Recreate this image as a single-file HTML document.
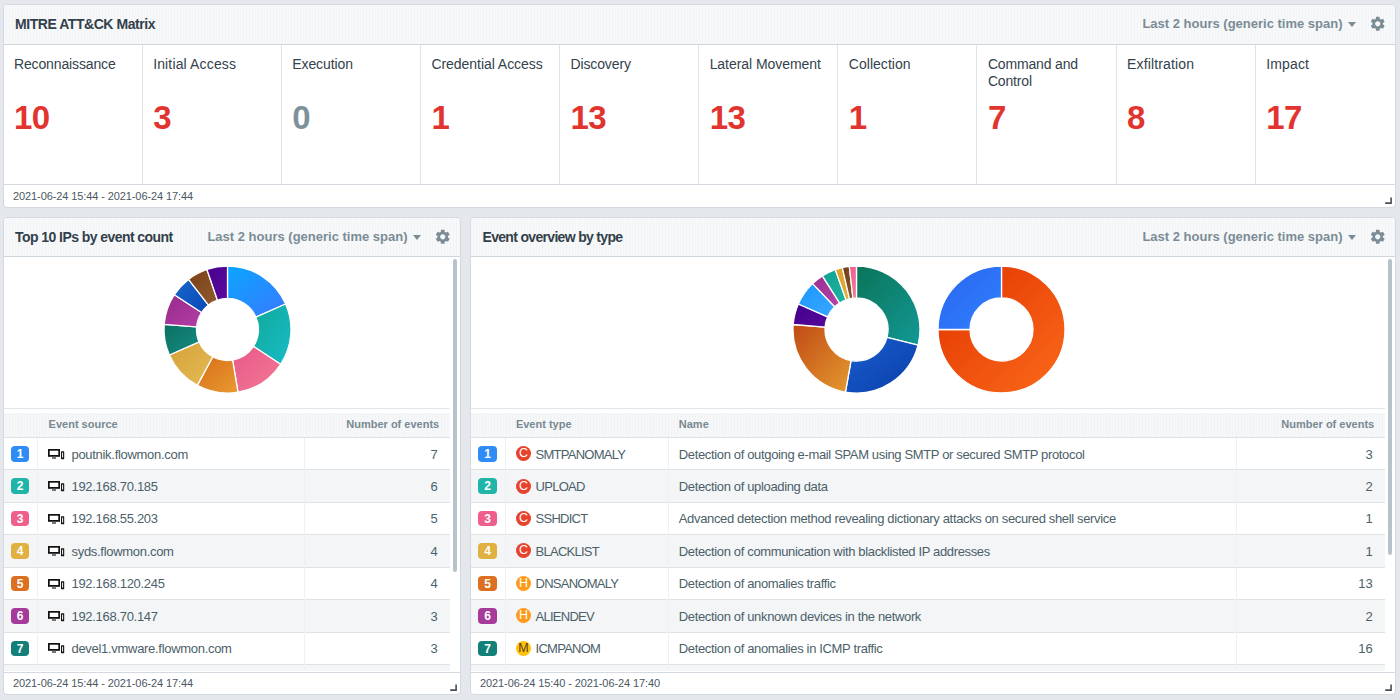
<!DOCTYPE html>
<html><head><meta charset="utf-8">
<style>
*{box-sizing:border-box;margin:0;padding:0}
html,body{width:1400px;height:700px;overflow:hidden;background:#e4e7eb;font-family:"Liberation Sans",sans-serif;color:#3f4f59;position:relative}
.t{position:absolute;white-space:nowrap}
.b{position:absolute}
</style></head><body>
<div class="b" style="left:2.5px;top:4px;width:1393.5px;height:203.5px;background:#fff;border:1px solid #d3d9de;border-radius:4px"></div>
<div class="b" style="left:3.5px;top:5px;width:1391.5px;height:38.5px;background:linear-gradient(#f7f8f9 1px, transparent 1px) 0 0/3px 2px, linear-gradient(90deg, #f7f8f9 2px, #eef0f2 2px) 0 0/3px 2px;border-radius:3px 3px 0 0"></div>
<div class="b" style="left:3.5px;top:43.5px;width:1391.5px;height:1.0px;background:#cfd6db"></div>
<div class="b" style="left:3.5px;top:184px;width:1391.5px;height:1px;background:#d3d9de"></div>
<div class="t" style="left:15px;top:16.75px;font-size:14px;line-height:14px;font-weight:bold;color:#33404a;letter-spacing:-0.45px;">MITRE ATT&amp;CK Matrix</div>
<div class="t" style="right:57.5px;text-align:right;top:17.00px;font-size:13px;line-height:13px;font-weight:bold;color:#7b8c96;letter-spacing:0px;">Last 2 hours (generic time span)</div>
<div class="b" style="left:1348.2px;top:21.7px;width:0;height:0;border-left:4.5px solid transparent;border-right:4.5px solid transparent;border-top:5px solid #7b8c96"></div>
<svg class="b" style="left:1368.95px;top:14.95px;width:17.5px;height:17.5px" viewBox="0 0 24 24"><path fill="#7b8c96" d="M19.14,12.94c0.04-0.3,0.06-0.61,0.06-0.94c0-0.32-0.02-0.64-0.07-0.94l2.03-1.58c0.18-0.14,0.23-0.41,0.12-0.61l-1.92-3.32c-0.12-0.22-0.37-0.29-0.59-0.22l-2.39,0.96c-0.5-0.38-1.03-0.7-1.62-0.94L14.4,2.81c-0.04-0.24-0.24-0.41-0.48-0.41h-3.84c-0.24,0-0.43,0.17-0.47,0.41L9.25,5.35C8.66,5.59,8.12,5.92,7.63,6.29L5.24,5.33c-0.22-0.08-0.47,0-0.59,0.22L2.74,8.87C2.62,9.08,2.66,9.34,2.86,9.48l2.03,1.58C4.84,11.36,4.8,11.69,4.8,12s0.02,0.64,0.07,0.94l-2.03,1.58c-0.18,0.14-0.23,0.41-0.12,0.61l1.92,3.32c0.12,0.22,0.37,0.29,0.59,0.22l2.39-0.96c0.5,0.38,1.03,0.7,1.62,0.94l0.36,2.54c0.05,0.24,0.24,0.41,0.48,0.41h3.84c0.24,0,0.44-0.17,0.47-0.41l0.36-2.54c0.59-0.24,1.13-0.56,1.62-0.94l2.39,0.96c0.22,0.08,0.47,0,0.59-0.22l1.92-3.32c0.12-0.22,0.07-0.47-0.12-0.61L19.14,12.94z M12,15.6c-1.98,0-3.6-1.62-3.6-3.6s1.62-3.6,3.6-3.6s3.6,1.62,3.6,3.6S13.98,15.6,12,15.6z"/></svg>
<div class="t" style="left:14.0px;top:56.40px;font-size:14px;line-height:16.5px;font-weight:normal;color:#34424c;letter-spacing:-0.14px;">Reconnaissance</div>
<div class="t" style="left:14.0px;top:101.07px;font-size:33px;line-height:33px;font-weight:bold;color:#e2342f;letter-spacing:-0.6px;">10</div>
<div class="b" style="left:141.625px;top:45px;width:1.0px;height:139px;background:#dde3e7"></div>
<div class="t" style="left:153.125px;top:56.40px;font-size:14px;line-height:16.5px;font-weight:normal;color:#34424c;letter-spacing:0.15px;">Initial Access</div>
<div class="t" style="left:153.125px;top:101.07px;font-size:33px;line-height:33px;font-weight:bold;color:#e2342f;letter-spacing:-0.6px;">3</div>
<div class="b" style="left:280.75px;top:45px;width:1.0px;height:139px;background:#dde3e7"></div>
<div class="t" style="left:292.25px;top:56.40px;font-size:14px;line-height:16.5px;font-weight:normal;color:#34424c;letter-spacing:-0.1px;">Execution</div>
<div class="t" style="left:292.25px;top:101.07px;font-size:33px;line-height:33px;font-weight:bold;color:#7e919b;letter-spacing:-0.6px;">0</div>
<div class="b" style="left:419.875px;top:45px;width:1.0px;height:139px;background:#dde3e7"></div>
<div class="t" style="left:431.375px;top:56.40px;font-size:14px;line-height:16.5px;font-weight:normal;color:#34424c;letter-spacing:-0.04px;">Credential Access</div>
<div class="t" style="left:431.375px;top:101.07px;font-size:33px;line-height:33px;font-weight:bold;color:#e2342f;letter-spacing:-0.6px;">1</div>
<div class="b" style="left:559.0px;top:45px;width:1.0px;height:139px;background:#dde3e7"></div>
<div class="t" style="left:570.5px;top:56.40px;font-size:14px;line-height:16.5px;font-weight:normal;color:#34424c;letter-spacing:-0.13px;">Discovery</div>
<div class="t" style="left:570.5px;top:101.07px;font-size:33px;line-height:33px;font-weight:bold;color:#e2342f;letter-spacing:-0.6px;">13</div>
<div class="b" style="left:698.125px;top:45px;width:1.0px;height:139px;background:#dde3e7"></div>
<div class="t" style="left:709.625px;top:56.40px;font-size:14px;line-height:16.5px;font-weight:normal;color:#34424c;letter-spacing:-0.05px;">Lateral Movement</div>
<div class="t" style="left:709.625px;top:101.07px;font-size:33px;line-height:33px;font-weight:bold;color:#e2342f;letter-spacing:-0.6px;">13</div>
<div class="b" style="left:837.25px;top:45px;width:1.0px;height:139px;background:#dde3e7"></div>
<div class="t" style="left:848.75px;top:56.40px;font-size:14px;line-height:16.5px;font-weight:normal;color:#34424c;letter-spacing:0.04px;">Collection</div>
<div class="t" style="left:848.75px;top:101.07px;font-size:33px;line-height:33px;font-weight:bold;color:#e2342f;letter-spacing:-0.6px;">1</div>
<div class="b" style="left:976.375px;top:45px;width:1.0px;height:139px;background:#dde3e7"></div>
<div class="t" style="left:987.875px;top:56.40px;font-size:14px;line-height:16.5px;font-weight:normal;color:#34424c;letter-spacing:-0.16px;">Command and<br>Control</div>
<div class="t" style="left:987.875px;top:101.07px;font-size:33px;line-height:33px;font-weight:bold;color:#e2342f;letter-spacing:-0.6px;">7</div>
<div class="b" style="left:1115.5px;top:45px;width:1.0px;height:139px;background:#dde3e7"></div>
<div class="t" style="left:1127.0px;top:56.40px;font-size:14px;line-height:16.5px;font-weight:normal;color:#34424c;letter-spacing:0.15px;">Exfiltration</div>
<div class="t" style="left:1127.0px;top:101.07px;font-size:33px;line-height:33px;font-weight:bold;color:#e2342f;letter-spacing:-0.6px;">8</div>
<div class="b" style="left:1254.625px;top:45px;width:1.0px;height:139px;background:#dde3e7"></div>
<div class="t" style="left:1266.125px;top:56.40px;font-size:14px;line-height:16.5px;font-weight:normal;color:#34424c;letter-spacing:0.17px;">Impact</div>
<div class="t" style="left:1266.125px;top:101.07px;font-size:33px;line-height:33px;font-weight:bold;color:#e2342f;letter-spacing:-0.6px;">17</div>
<div class="t" style="left:13px;top:190.89px;font-size:11px;line-height:11px;font-weight:normal;color:#4b5862;letter-spacing:-0.1px;">2021-06-24 15:44 - 2021-06-24 17:44</div>
<svg class="b" style="left:1385px;top:197px;width:7px;height:7px" viewBox="0 0 7 7"><path d="M6.1,0.4V6.1H0.2" fill="none" stroke="#4c4c56" stroke-width="1.6"/></svg>
<div class="b" style="left:2.5px;top:217px;width:458.5px;height:478px;background:#fff;border:1px solid #d3d9de;border-radius:4px"></div>
<div class="b" style="left:3.5px;top:218px;width:456.5px;height:38px;background:linear-gradient(#f7f8f9 1px, transparent 1px) 0 0/3px 2px, linear-gradient(90deg, #f7f8f9 2px, #eef0f2 2px) 0 0/3px 2px;border-radius:3px 3px 0 0"></div>
<div class="b" style="left:3.5px;top:256px;width:456.5px;height:1px;background:#cfd6db"></div>
<div class="b" style="left:3.5px;top:672px;width:456.5px;height:1px;background:#d3d9de"></div>
<div class="t" style="left:15px;top:229.75px;font-size:14px;line-height:14px;font-weight:bold;color:#33404a;letter-spacing:-0.56px;">Top 10 IPs by event count</div>
<div class="t" style="right:992.5px;text-align:right;top:230.30px;font-size:13px;line-height:13px;font-weight:bold;color:#7b8c96;letter-spacing:0px;">Last 2 hours (generic time span)</div>
<div class="b" style="left:413.2px;top:235.0px;width:0;height:0;border-left:4.5px solid transparent;border-right:4.5px solid transparent;border-top:5px solid #7b8c96"></div>
<svg class="b" style="left:433.75px;top:228.25px;width:17.5px;height:17.5px" viewBox="0 0 24 24"><path fill="#7b8c96" d="M19.14,12.94c0.04-0.3,0.06-0.61,0.06-0.94c0-0.32-0.02-0.64-0.07-0.94l2.03-1.58c0.18-0.14,0.23-0.41,0.12-0.61l-1.92-3.32c-0.12-0.22-0.37-0.29-0.59-0.22l-2.39,0.96c-0.5-0.38-1.03-0.7-1.62-0.94L14.4,2.81c-0.04-0.24-0.24-0.41-0.48-0.41h-3.84c-0.24,0-0.43,0.17-0.47,0.41L9.25,5.35C8.66,5.59,8.12,5.92,7.63,6.29L5.24,5.33c-0.22-0.08-0.47,0-0.59,0.22L2.74,8.87C2.62,9.08,2.66,9.34,2.86,9.48l2.03,1.58C4.84,11.36,4.8,11.69,4.8,12s0.02,0.64,0.07,0.94l-2.03,1.58c-0.18,0.14-0.23,0.41-0.12,0.61l1.92,3.32c0.12,0.22,0.37,0.29,0.59,0.22l2.39-0.96c0.5,0.38,1.03,0.7,1.62,0.94l0.36,2.54c0.05,0.24,0.24,0.41,0.48,0.41h3.84c0.24,0,0.44-0.17,0.47-0.41l0.36-2.54c0.59-0.24,1.13-0.56,1.62-0.94l2.39,0.96c0.22,0.08,0.47,0,0.59-0.22l1.92-3.32c0.12-0.22,0.07-0.47-0.12-0.61L19.14,12.94z M12,15.6c-1.98,0-3.6-1.62-3.6-3.6s1.62-3.6,3.6-3.6s3.6,1.62,3.6,3.6S13.98,15.6,12,15.6z"/></svg>
<svg class="b" style="left:161.60px;top:264.00px;width:131.0px;height:131.0px" viewBox="0 0 131.0 131.0"><defs><linearGradient id="gL_0" x1="0" y1="0" x2="1" y2="1"><stop offset="0" stop-color="#0aa6ff"/><stop offset="1" stop-color="#3a78ff"/></linearGradient><linearGradient id="gL_1" x1="0" y1="0" x2="1" y2="1"><stop offset="0" stop-color="#10a898"/><stop offset="1" stop-color="#18bcc8"/></linearGradient><linearGradient id="gL_2" x1="0" y1="0" x2="1" y2="1"><stop offset="0" stop-color="#e8588a"/><stop offset="1" stop-color="#f27a94"/></linearGradient><linearGradient id="gL_3" x1="0" y1="0" x2="1" y2="1"><stop offset="0" stop-color="#d86e18"/><stop offset="1" stop-color="#e89a32"/></linearGradient><linearGradient id="gL_4" x1="0" y1="0" x2="1" y2="1"><stop offset="0" stop-color="#d8a038"/><stop offset="1" stop-color="#e2bc55"/></linearGradient><linearGradient id="gL_5" x1="0" y1="0" x2="1" y2="1"><stop offset="0" stop-color="#0a7060"/><stop offset="1" stop-color="#188c84"/></linearGradient><linearGradient id="gL_6" x1="0" y1="0" x2="1" y2="1"><stop offset="0" stop-color="#962a8a"/><stop offset="1" stop-color="#b43ea6"/></linearGradient><linearGradient id="gL_7" x1="0" y1="0" x2="1" y2="1"><stop offset="0" stop-color="#1868c8"/><stop offset="1" stop-color="#0a46b8"/></linearGradient><linearGradient id="gL_8" x1="0" y1="0" x2="1" y2="1"><stop offset="0" stop-color="#7a4018"/><stop offset="1" stop-color="#905a30"/></linearGradient><linearGradient id="gL_9" x1="0" y1="0" x2="1" y2="1"><stop offset="0" stop-color="#48008a"/><stop offset="1" stop-color="#5a0aa0"/></linearGradient></defs><path d="M65.50,2.00A63.5,63.5 0 0 1 123.64,39.98L93.89,53.04A31,31 0 0 0 65.50,34.50Z" fill="url(#gL_0)" stroke="#fff" stroke-width="1.3" stroke-linejoin="bevel"/><path d="M123.64,39.98A63.5,63.5 0 0 1 118.63,100.27L91.44,82.47A31,31 0 0 0 93.89,53.04Z" fill="url(#gL_1)" stroke="#fff" stroke-width="1.3" stroke-linejoin="bevel"/><path d="M118.63,100.27A63.5,63.5 0 0 1 75.98,128.13L70.62,96.07A31,31 0 0 0 91.44,82.47Z" fill="url(#gL_2)" stroke="#fff" stroke-width="1.3" stroke-linejoin="bevel"/><path d="M75.98,128.13A63.5,63.5 0 0 1 35.30,121.36L50.76,92.77A31,31 0 0 0 70.62,96.07Z" fill="url(#gL_3)" stroke="#fff" stroke-width="1.3" stroke-linejoin="bevel"/><path d="M35.30,121.36A63.5,63.5 0 0 1 7.36,91.02L37.11,77.96A31,31 0 0 0 50.76,92.77Z" fill="url(#gL_4)" stroke="#fff" stroke-width="1.3" stroke-linejoin="bevel"/><path d="M7.36,91.02A63.5,63.5 0 0 1 2.21,60.30L34.60,62.96A31,31 0 0 0 37.11,77.96Z" fill="url(#gL_5)" stroke="#fff" stroke-width="1.3" stroke-linejoin="bevel"/><path d="M2.21,60.30A63.5,63.5 0 0 1 12.37,30.73L39.56,48.53A31,31 0 0 0 34.60,62.96Z" fill="url(#gL_6)" stroke="#fff" stroke-width="1.3" stroke-linejoin="bevel"/><path d="M12.37,30.73A63.5,63.5 0 0 1 26.49,15.39L46.46,41.04A31,31 0 0 0 39.56,48.53Z" fill="url(#gL_7)" stroke="#fff" stroke-width="1.3" stroke-linejoin="bevel"/><path d="M26.49,15.39A63.5,63.5 0 0 1 44.93,5.42L55.46,36.17A31,31 0 0 0 46.46,41.04Z" fill="url(#gL_8)" stroke="#fff" stroke-width="1.3" stroke-linejoin="bevel"/><path d="M44.93,5.42A63.5,63.5 0 0 1 65.50,2.00L65.50,34.50A31,31 0 0 0 55.46,36.17Z" fill="url(#gL_9)" stroke="#fff" stroke-width="1.3" stroke-linejoin="bevel"/></svg>
<div class="b" style="left:4px;top:408px;width:446px;height:1px;background:#e2e6e9"></div>
<div class="b" style="left:4px;top:413px;width:446px;height:24px;background:linear-gradient(#f6f7f8 1px, transparent 1px) 0 0/3px 2px, linear-gradient(90deg, #f6f7f8 2px, #eceef0 2px) 0 0/3px 2px"></div>
<div class="b" style="left:4px;top:437px;width:446px;height:1px;background:#dde2e6"></div>
<div class="b" style="left:4px;top:470px;width:446px;height:32px;background:#f3f5f7"></div>
<div class="b" style="left:4px;top:469px;width:446px;height:1px;background:#dde2e6"></div>
<div class="b" style="left:4px;top:502px;width:446px;height:1px;background:#dde2e6"></div>
<div class="b" style="left:4px;top:535px;width:446px;height:32px;background:#f3f5f7"></div>
<div class="b" style="left:4px;top:534px;width:446px;height:1px;background:#dde2e6"></div>
<div class="b" style="left:4px;top:567px;width:446px;height:1px;background:#dde2e6"></div>
<div class="b" style="left:4px;top:600px;width:446px;height:32px;background:#f3f5f7"></div>
<div class="b" style="left:4px;top:599px;width:446px;height:1px;background:#dde2e6"></div>
<div class="b" style="left:4px;top:632px;width:446px;height:1px;background:#dde2e6"></div>
<div class="b" style="left:4px;top:665px;width:446px;height:6px;background:#f3f5f7"></div>
<div class="b" style="left:4px;top:664px;width:446px;height:1px;background:#dde2e6"></div>
<div class="b" style="left:37px;top:438px;width:1px;height:233px;background:#eef1f3"></div>
<div class="b" style="left:304px;top:438px;width:1px;height:233px;background:#eef1f3"></div>
<div class="t" style="left:48.6px;top:419.49px;font-size:11px;line-height:11px;font-weight:bold;color:#788992;letter-spacing:0px;">Event source</div>
<div class="t" style="right:960.8px;text-align:right;top:419.49px;font-size:11px;line-height:11px;font-weight:bold;color:#788992;letter-spacing:0px;">Number of events</div>
<div class="b" style="left:10.9px;top:446.01px;width:18.2px;height:15.5px;border-radius:4px;background:#2f8cf5;color:#fff;font-size:12px;font-weight:bold;line-height:16.5px;text-align:center">1</div>
<svg class="b" style="left:48px;top:448.81px;width:17px;height:11px" viewBox="0 0 17 11"><rect x="0" y="0" width="12" height="7.8" fill="#111"/><rect x="1.7" y="1.7" width="8.6" height="4.3" fill="#fff"/><rect x="4" y="7.8" width="4" height="2.2" fill="#777"/><rect x="13" y="2.2" width="3.2" height="8" rx="0.6" fill="#111"/><rect x="14.1" y="3.6" width="1" height="5" fill="#fff"/></svg>
<div class="t" style="left:71.5px;top:447.51px;font-size:13px;line-height:13px;font-weight:normal;color:#4c5f69;letter-spacing:-0.3px;">poutnik.flowmon.com</div>
<div class="t" style="right:962.3px;text-align:right;top:447.51px;font-size:13px;line-height:13px;font-weight:normal;color:#4c5f69;letter-spacing:0px;">7</div>
<div class="b" style="left:10.9px;top:478.44px;width:18.2px;height:15.5px;border-radius:4px;background:#1fb5a8;color:#fff;font-size:12px;font-weight:bold;line-height:16.5px;text-align:center">2</div>
<svg class="b" style="left:48px;top:481.25px;width:17px;height:11px" viewBox="0 0 17 11"><rect x="0" y="0" width="12" height="7.8" fill="#111"/><rect x="1.7" y="1.7" width="8.6" height="4.3" fill="#fff"/><rect x="4" y="7.8" width="4" height="2.2" fill="#777"/><rect x="13" y="2.2" width="3.2" height="8" rx="0.6" fill="#111"/><rect x="14.1" y="3.6" width="1" height="5" fill="#fff"/></svg>
<div class="t" style="left:71.5px;top:479.94px;font-size:13px;line-height:13px;font-weight:normal;color:#4c5f69;letter-spacing:-0.3px;">192.168.70.185</div>
<div class="t" style="right:962.3px;text-align:right;top:479.94px;font-size:13px;line-height:13px;font-weight:normal;color:#4c5f69;letter-spacing:0px;">6</div>
<div class="b" style="left:10.9px;top:510.88px;width:18.2px;height:15.5px;border-radius:4px;background:#ee5f8c;color:#fff;font-size:12px;font-weight:bold;line-height:16.5px;text-align:center">3</div>
<svg class="b" style="left:48px;top:513.68px;width:17px;height:11px" viewBox="0 0 17 11"><rect x="0" y="0" width="12" height="7.8" fill="#111"/><rect x="1.7" y="1.7" width="8.6" height="4.3" fill="#fff"/><rect x="4" y="7.8" width="4" height="2.2" fill="#777"/><rect x="13" y="2.2" width="3.2" height="8" rx="0.6" fill="#111"/><rect x="14.1" y="3.6" width="1" height="5" fill="#fff"/></svg>
<div class="t" style="left:71.5px;top:512.37px;font-size:13px;line-height:13px;font-weight:normal;color:#4c5f69;letter-spacing:-0.3px;">192.168.55.203</div>
<div class="t" style="right:962.3px;text-align:right;top:512.37px;font-size:13px;line-height:13px;font-weight:normal;color:#4c5f69;letter-spacing:0px;">5</div>
<div class="b" style="left:10.9px;top:543.30px;width:18.2px;height:15.5px;border-radius:4px;background:#e0b040;color:#fff;font-size:12px;font-weight:bold;line-height:16.5px;text-align:center">4</div>
<svg class="b" style="left:48px;top:546.11px;width:17px;height:11px" viewBox="0 0 17 11"><rect x="0" y="0" width="12" height="7.8" fill="#111"/><rect x="1.7" y="1.7" width="8.6" height="4.3" fill="#fff"/><rect x="4" y="7.8" width="4" height="2.2" fill="#777"/><rect x="13" y="2.2" width="3.2" height="8" rx="0.6" fill="#111"/><rect x="14.1" y="3.6" width="1" height="5" fill="#fff"/></svg>
<div class="t" style="left:71.5px;top:544.80px;font-size:13px;line-height:13px;font-weight:normal;color:#4c5f69;letter-spacing:-0.3px;">syds.flowmon.com</div>
<div class="t" style="right:962.3px;text-align:right;top:544.80px;font-size:13px;line-height:13px;font-weight:normal;color:#4c5f69;letter-spacing:0px;">4</div>
<div class="b" style="left:10.9px;top:575.74px;width:18.2px;height:15.5px;border-radius:4px;background:#dd7020;color:#fff;font-size:12px;font-weight:bold;line-height:16.5px;text-align:center">5</div>
<svg class="b" style="left:48px;top:578.54px;width:17px;height:11px" viewBox="0 0 17 11"><rect x="0" y="0" width="12" height="7.8" fill="#111"/><rect x="1.7" y="1.7" width="8.6" height="4.3" fill="#fff"/><rect x="4" y="7.8" width="4" height="2.2" fill="#777"/><rect x="13" y="2.2" width="3.2" height="8" rx="0.6" fill="#111"/><rect x="14.1" y="3.6" width="1" height="5" fill="#fff"/></svg>
<div class="t" style="left:71.5px;top:577.23px;font-size:13px;line-height:13px;font-weight:normal;color:#4c5f69;letter-spacing:-0.3px;">192.168.120.245</div>
<div class="t" style="right:962.3px;text-align:right;top:577.23px;font-size:13px;line-height:13px;font-weight:normal;color:#4c5f69;letter-spacing:0px;">4</div>
<div class="b" style="left:10.9px;top:608.16px;width:18.2px;height:15.5px;border-radius:4px;background:#a63b9c;color:#fff;font-size:12px;font-weight:bold;line-height:16.5px;text-align:center">6</div>
<svg class="b" style="left:48px;top:610.97px;width:17px;height:11px" viewBox="0 0 17 11"><rect x="0" y="0" width="12" height="7.8" fill="#111"/><rect x="1.7" y="1.7" width="8.6" height="4.3" fill="#fff"/><rect x="4" y="7.8" width="4" height="2.2" fill="#777"/><rect x="13" y="2.2" width="3.2" height="8" rx="0.6" fill="#111"/><rect x="14.1" y="3.6" width="1" height="5" fill="#fff"/></svg>
<div class="t" style="left:71.5px;top:609.66px;font-size:13px;line-height:13px;font-weight:normal;color:#4c5f69;letter-spacing:-0.3px;">192.168.70.147</div>
<div class="t" style="right:962.3px;text-align:right;top:609.66px;font-size:13px;line-height:13px;font-weight:normal;color:#4c5f69;letter-spacing:0px;">3</div>
<div class="b" style="left:10.9px;top:640.59px;width:18.2px;height:15.5px;border-radius:4px;background:#127f78;color:#fff;font-size:12px;font-weight:bold;line-height:16.5px;text-align:center">7</div>
<svg class="b" style="left:48px;top:643.39px;width:17px;height:11px" viewBox="0 0 17 11"><rect x="0" y="0" width="12" height="7.8" fill="#111"/><rect x="1.7" y="1.7" width="8.6" height="4.3" fill="#fff"/><rect x="4" y="7.8" width="4" height="2.2" fill="#777"/><rect x="13" y="2.2" width="3.2" height="8" rx="0.6" fill="#111"/><rect x="14.1" y="3.6" width="1" height="5" fill="#fff"/></svg>
<div class="t" style="left:71.5px;top:642.09px;font-size:13px;line-height:13px;font-weight:normal;color:#4c5f69;letter-spacing:-0.3px;">devel1.vmware.flowmon.com</div>
<div class="t" style="right:962.3px;text-align:right;top:642.09px;font-size:13px;line-height:13px;font-weight:normal;color:#4c5f69;letter-spacing:0px;">3</div>
<div class="b" style="left:453px;top:259px;width:4px;height:313px;background:#b7c3ca;border-radius:2px"></div>
<div class="t" style="left:13px;top:678.29px;font-size:11px;line-height:11px;font-weight:normal;color:#4b5862;letter-spacing:-0.1px;">2021-06-24 15:44 - 2021-06-24 17:44</div>
<svg class="b" style="left:450px;top:684px;width:7px;height:7px" viewBox="0 0 7 7"><path d="M6.1,0.4V6.1H0.2" fill="none" stroke="#4c4c56" stroke-width="1.6"/></svg>
<div class="b" style="left:470px;top:217px;width:926px;height:478px;background:#fff;border:1px solid #d3d9de;border-radius:4px"></div>
<div class="b" style="left:471px;top:218px;width:924px;height:38px;background:linear-gradient(#f7f8f9 1px, transparent 1px) 0 0/3px 2px, linear-gradient(90deg, #f7f8f9 2px, #eef0f2 2px) 0 0/3px 2px;border-radius:3px 3px 0 0"></div>
<div class="b" style="left:471px;top:256px;width:924px;height:1px;background:#cfd6db"></div>
<div class="b" style="left:471px;top:672px;width:924px;height:1px;background:#d3d9de"></div>
<div class="t" style="left:482.5px;top:229.75px;font-size:14px;line-height:14px;font-weight:bold;color:#33404a;letter-spacing:-0.68px;">Event overview by type</div>
<div class="t" style="right:57.5px;text-align:right;top:230.30px;font-size:13px;line-height:13px;font-weight:bold;color:#7b8c96;letter-spacing:0px;">Last 2 hours (generic time span)</div>
<div class="b" style="left:1348.2px;top:235.0px;width:0;height:0;border-left:4.5px solid transparent;border-right:4.5px solid transparent;border-top:5px solid #7b8c96"></div>
<svg class="b" style="left:1368.95px;top:228.25px;width:17.5px;height:17.5px" viewBox="0 0 24 24"><path fill="#7b8c96" d="M19.14,12.94c0.04-0.3,0.06-0.61,0.06-0.94c0-0.32-0.02-0.64-0.07-0.94l2.03-1.58c0.18-0.14,0.23-0.41,0.12-0.61l-1.92-3.32c-0.12-0.22-0.37-0.29-0.59-0.22l-2.39,0.96c-0.5-0.38-1.03-0.7-1.62-0.94L14.4,2.81c-0.04-0.24-0.24-0.41-0.48-0.41h-3.84c-0.24,0-0.43,0.17-0.47,0.41L9.25,5.35C8.66,5.59,8.12,5.92,7.63,6.29L5.24,5.33c-0.22-0.08-0.47,0-0.59,0.22L2.74,8.87C2.62,9.08,2.66,9.34,2.86,9.48l2.03,1.58C4.84,11.36,4.8,11.69,4.8,12s0.02,0.64,0.07,0.94l-2.03,1.58c-0.18,0.14-0.23,0.41-0.12,0.61l1.92,3.32c0.12,0.22,0.37,0.29,0.59,0.22l2.39-0.96c0.5,0.38,1.03,0.7,1.62,0.94l0.36,2.54c0.05,0.24,0.24,0.41,0.48,0.41h3.84c0.24,0,0.44-0.17,0.47-0.41l0.36-2.54c0.59-0.24,1.13-0.56,1.62-0.94l2.39,0.96c0.22,0.08,0.47,0,0.59-0.22l1.92-3.32c0.12-0.22,0.07-0.47-0.12-0.61L19.14,12.94z M12,15.6c-1.98,0-3.6-1.62-3.6-3.6s1.62-3.6,3.6-3.6s3.6,1.62,3.6,3.6S13.98,15.6,12,15.6z"/></svg>
<svg class="b" style="left:790.50px;top:264.00px;width:131.0px;height:131.0px" viewBox="0 0 131.0 131.0"><defs><linearGradient id="gM_0" x1="0" y1="0" x2="1" y2="1"><stop offset="0" stop-color="#0b7458"/><stop offset="1" stop-color="#129895"/></linearGradient><linearGradient id="gM_1" x1="0" y1="0" x2="1" y2="1"><stop offset="0" stop-color="#1a5ed0"/><stop offset="1" stop-color="#0a3ea8"/></linearGradient><linearGradient id="gM_2" x1="0" y1="0" x2="1" y2="1"><stop offset="0" stop-color="#c04a14"/><stop offset="1" stop-color="#e49a30"/></linearGradient><linearGradient id="gM_3" x1="0" y1="0" x2="1" y2="1"><stop offset="0" stop-color="#40008a"/><stop offset="1" stop-color="#560a9a"/></linearGradient><linearGradient id="gM_4" x1="0" y1="0" x2="1" y2="1"><stop offset="0" stop-color="#1a96ff"/><stop offset="1" stop-color="#3aa8ff"/></linearGradient><linearGradient id="gM_5" x1="0" y1="0" x2="1" y2="1"><stop offset="0" stop-color="#9a2f92"/><stop offset="1" stop-color="#b444a8"/></linearGradient><linearGradient id="gM_6" x1="0" y1="0" x2="1" y2="1"><stop offset="0" stop-color="#12a090"/><stop offset="1" stop-color="#1ab4a2"/></linearGradient><linearGradient id="gM_7" x1="0" y1="0" x2="1" y2="1"><stop offset="0" stop-color="#dc9a28"/><stop offset="1" stop-color="#e8b040"/></linearGradient><linearGradient id="gM_8" x1="0" y1="0" x2="1" y2="1"><stop offset="0" stop-color="#704018"/><stop offset="1" stop-color="#885428"/></linearGradient><linearGradient id="gM_9" x1="0" y1="0" x2="1" y2="1"><stop offset="0" stop-color="#f05a90"/><stop offset="1" stop-color="#f47aa0"/></linearGradient></defs><path d="M65.50,2.00A63.5,63.5 0 0 1 127.03,81.18L96.02,73.28A31.5,31.5 0 0 0 65.50,34.00Z" fill="url(#gM_0)" stroke="#fff" stroke-width="1.3" stroke-linejoin="bevel"/><path d="M127.03,81.18A63.5,63.5 0 0 1 54.47,128.04L60.03,96.52A31.5,31.5 0 0 0 96.02,73.28Z" fill="url(#gM_1)" stroke="#fff" stroke-width="1.3" stroke-linejoin="bevel"/><path d="M54.47,128.04A63.5,63.5 0 0 1 2.20,60.52L34.10,63.03A31.5,31.5 0 0 0 60.03,96.52Z" fill="url(#gM_2)" stroke="#fff" stroke-width="1.3" stroke-linejoin="bevel"/><path d="M2.20,60.52A63.5,63.5 0 0 1 7.36,39.98L36.66,52.84A31.5,31.5 0 0 0 34.10,63.03Z" fill="url(#gM_3)" stroke="#fff" stroke-width="1.3" stroke-linejoin="bevel"/><path d="M7.36,39.98A63.5,63.5 0 0 1 21.63,19.59L43.74,42.73A31.5,31.5 0 0 0 36.66,52.84Z" fill="url(#gM_4)" stroke="#fff" stroke-width="1.3" stroke-linejoin="bevel"/><path d="M21.63,19.59A63.5,63.5 0 0 1 31.38,11.94L48.58,38.93A31.5,31.5 0 0 0 43.74,42.73Z" fill="url(#gM_5)" stroke="#fff" stroke-width="1.3" stroke-linejoin="bevel"/><path d="M31.38,11.94A63.5,63.5 0 0 1 44.30,5.64L54.99,35.81A31.5,31.5 0 0 0 48.58,38.93Z" fill="url(#gM_6)" stroke="#fff" stroke-width="1.3" stroke-linejoin="bevel"/><path d="M44.30,5.64A63.5,63.5 0 0 1 51.32,3.60L58.47,34.80A31.5,31.5 0 0 0 54.99,35.81Z" fill="url(#gM_7)" stroke="#fff" stroke-width="1.3" stroke-linejoin="bevel"/><path d="M51.32,3.60A63.5,63.5 0 0 1 58.31,2.41L61.93,34.20A31.5,31.5 0 0 0 58.47,34.80Z" fill="url(#gM_8)" stroke="#fff" stroke-width="1.3" stroke-linejoin="bevel"/><path d="M58.31,2.41A63.5,63.5 0 0 1 65.50,2.00L65.50,34.00A31.5,31.5 0 0 0 61.93,34.20Z" fill="url(#gM_9)" stroke="#fff" stroke-width="1.3" stroke-linejoin="bevel"/></svg>
<svg class="b" style="left:935.50px;top:264.00px;width:131.0px;height:131.0px" viewBox="0 0 131.0 131.0"><defs><linearGradient id="gR_0" x1="0" y1="0" x2="1" y2="1"><stop offset="0" stop-color="#e23400"/><stop offset="1" stop-color="#fa6a1a"/></linearGradient><linearGradient id="gR_1" x1="0" y1="0" x2="1" y2="1"><stop offset="0" stop-color="#2a66ee"/><stop offset="1" stop-color="#3080ff"/></linearGradient></defs><path d="M65.50,2.00A63.5,63.5 0 1 1 2.00,65.50L34.00,65.50A31.5,31.5 0 1 0 65.50,34.00Z" fill="url(#gR_0)" stroke="#fff" stroke-width="1.3" stroke-linejoin="bevel"/><path d="M2.00,65.50A63.5,63.5 0 0 1 65.50,2.00L65.50,34.00A31.5,31.5 0 0 0 34.00,65.50Z" fill="url(#gR_1)" stroke="#fff" stroke-width="1.3" stroke-linejoin="bevel"/></svg>
<div class="b" style="left:471px;top:408px;width:914px;height:1px;background:#e2e6e9"></div>
<div class="b" style="left:471px;top:413px;width:914px;height:24px;background:linear-gradient(#f6f7f8 1px, transparent 1px) 0 0/3px 2px, linear-gradient(90deg, #f6f7f8 2px, #eceef0 2px) 0 0/3px 2px"></div>
<div class="b" style="left:471px;top:437px;width:914px;height:1px;background:#dde2e6"></div>
<div class="b" style="left:471px;top:470px;width:914px;height:32px;background:#f3f5f7"></div>
<div class="b" style="left:471px;top:469px;width:914px;height:1px;background:#dde2e6"></div>
<div class="b" style="left:471px;top:502px;width:914px;height:1px;background:#dde2e6"></div>
<div class="b" style="left:471px;top:535px;width:914px;height:32px;background:#f3f5f7"></div>
<div class="b" style="left:471px;top:534px;width:914px;height:1px;background:#dde2e6"></div>
<div class="b" style="left:471px;top:567px;width:914px;height:1px;background:#dde2e6"></div>
<div class="b" style="left:471px;top:600px;width:914px;height:32px;background:#f3f5f7"></div>
<div class="b" style="left:471px;top:599px;width:914px;height:1px;background:#dde2e6"></div>
<div class="b" style="left:471px;top:632px;width:914px;height:1px;background:#dde2e6"></div>
<div class="b" style="left:471px;top:665px;width:914px;height:6px;background:#f3f5f7"></div>
<div class="b" style="left:471px;top:664px;width:914px;height:1px;background:#dde2e6"></div>
<div class="b" style="left:505px;top:438px;width:1px;height:233px;background:#eef1f3"></div>
<div class="b" style="left:668px;top:438px;width:1px;height:233px;background:#eef1f3"></div>
<div class="b" style="left:1236px;top:438px;width:1px;height:233px;background:#eef1f3"></div>
<div class="t" style="left:515.9px;top:419.49px;font-size:11px;line-height:11px;font-weight:bold;color:#788992;letter-spacing:0px;">Event type</div>
<div class="t" style="left:678.8px;top:419.49px;font-size:11px;line-height:11px;font-weight:bold;color:#788992;letter-spacing:0px;">Name</div>
<div class="t" style="right:25.799999999999955px;text-align:right;top:419.49px;font-size:11px;line-height:11px;font-weight:bold;color:#788992;letter-spacing:0px;">Number of events</div>
<div class="b" style="left:478.4px;top:446.01px;width:18.2px;height:15.5px;border-radius:4px;background:#2f8cf5;color:#fff;font-size:12px;font-weight:bold;line-height:16.5px;text-align:center">1</div>
<div class="b" style="left:515.9px;top:446.11px;width:15px;height:15px;border-radius:50%;background:#e8412c;color:#fff;font-size:12.5px;font-weight:normal;line-height:15.5px;text-align:center">C</div>
<div class="t" style="left:535.6px;top:447.51px;font-size:13px;line-height:13px;font-weight:normal;color:#4c5f69;letter-spacing:-0.75px;">SMTPANOMALY</div>
<div class="t" style="left:678.8px;top:447.51px;font-size:13px;line-height:13px;font-weight:normal;color:#4c5f69;letter-spacing:-0.35px;">Detection of outgoing e-mail SPAM using SMTP or secured SMTP protocol</div>
<div class="t" style="right:27.200000000000045px;text-align:right;top:447.51px;font-size:13px;line-height:13px;font-weight:normal;color:#4c5f69;letter-spacing:0px;">3</div>
<div class="b" style="left:478.4px;top:478.44px;width:18.2px;height:15.5px;border-radius:4px;background:#1fb5a8;color:#fff;font-size:12px;font-weight:bold;line-height:16.5px;text-align:center">2</div>
<div class="b" style="left:515.9px;top:478.54px;width:15px;height:15px;border-radius:50%;background:#e8412c;color:#fff;font-size:12.5px;font-weight:normal;line-height:15.5px;text-align:center">C</div>
<div class="t" style="left:535.6px;top:479.94px;font-size:13px;line-height:13px;font-weight:normal;color:#4c5f69;letter-spacing:-0.75px;">UPLOAD</div>
<div class="t" style="left:678.8px;top:479.94px;font-size:13px;line-height:13px;font-weight:normal;color:#4c5f69;letter-spacing:-0.35px;">Detection of uploading data</div>
<div class="t" style="right:27.200000000000045px;text-align:right;top:479.94px;font-size:13px;line-height:13px;font-weight:normal;color:#4c5f69;letter-spacing:0px;">2</div>
<div class="b" style="left:478.4px;top:510.88px;width:18.2px;height:15.5px;border-radius:4px;background:#ee5f8c;color:#fff;font-size:12px;font-weight:bold;line-height:16.5px;text-align:center">3</div>
<div class="b" style="left:515.9px;top:510.98px;width:15px;height:15px;border-radius:50%;background:#e8412c;color:#fff;font-size:12.5px;font-weight:normal;line-height:15.5px;text-align:center">C</div>
<div class="t" style="left:535.6px;top:512.37px;font-size:13px;line-height:13px;font-weight:normal;color:#4c5f69;letter-spacing:-0.75px;">SSHDICT</div>
<div class="t" style="left:678.8px;top:512.37px;font-size:13px;line-height:13px;font-weight:normal;color:#4c5f69;letter-spacing:-0.35px;">Advanced detection method revealing dictionary attacks on secured shell service</div>
<div class="t" style="right:27.200000000000045px;text-align:right;top:512.37px;font-size:13px;line-height:13px;font-weight:normal;color:#4c5f69;letter-spacing:0px;">1</div>
<div class="b" style="left:478.4px;top:543.30px;width:18.2px;height:15.5px;border-radius:4px;background:#e0b040;color:#fff;font-size:12px;font-weight:bold;line-height:16.5px;text-align:center">4</div>
<div class="b" style="left:515.9px;top:543.40px;width:15px;height:15px;border-radius:50%;background:#e8412c;color:#fff;font-size:12.5px;font-weight:normal;line-height:15.5px;text-align:center">C</div>
<div class="t" style="left:535.6px;top:544.80px;font-size:13px;line-height:13px;font-weight:normal;color:#4c5f69;letter-spacing:-0.75px;">BLACKLIST</div>
<div class="t" style="left:678.8px;top:544.80px;font-size:13px;line-height:13px;font-weight:normal;color:#4c5f69;letter-spacing:-0.35px;">Detection of communication with blacklisted IP addresses</div>
<div class="t" style="right:27.200000000000045px;text-align:right;top:544.80px;font-size:13px;line-height:13px;font-weight:normal;color:#4c5f69;letter-spacing:0px;">1</div>
<div class="b" style="left:478.4px;top:575.74px;width:18.2px;height:15.5px;border-radius:4px;background:#dd7020;color:#fff;font-size:12px;font-weight:bold;line-height:16.5px;text-align:center">5</div>
<div class="b" style="left:515.9px;top:575.84px;width:15px;height:15px;border-radius:50%;background:#ff9a1a;color:#fff;font-size:12.5px;font-weight:normal;line-height:15.5px;text-align:center">H</div>
<div class="t" style="left:535.6px;top:577.23px;font-size:13px;line-height:13px;font-weight:normal;color:#4c5f69;letter-spacing:-0.75px;">DNSANOMALY</div>
<div class="t" style="left:678.8px;top:577.23px;font-size:13px;line-height:13px;font-weight:normal;color:#4c5f69;letter-spacing:-0.35px;">Detection of anomalies traffic</div>
<div class="t" style="right:27.200000000000045px;text-align:right;top:577.23px;font-size:13px;line-height:13px;font-weight:normal;color:#4c5f69;letter-spacing:0px;">13</div>
<div class="b" style="left:478.4px;top:608.16px;width:18.2px;height:15.5px;border-radius:4px;background:#a63b9c;color:#fff;font-size:12px;font-weight:bold;line-height:16.5px;text-align:center">6</div>
<div class="b" style="left:515.9px;top:608.26px;width:15px;height:15px;border-radius:50%;background:#ff9a1a;color:#fff;font-size:12.5px;font-weight:normal;line-height:15.5px;text-align:center">H</div>
<div class="t" style="left:535.6px;top:609.66px;font-size:13px;line-height:13px;font-weight:normal;color:#4c5f69;letter-spacing:-0.75px;">ALIENDEV</div>
<div class="t" style="left:678.8px;top:609.66px;font-size:13px;line-height:13px;font-weight:normal;color:#4c5f69;letter-spacing:-0.35px;">Detection of unknown devices in the network</div>
<div class="t" style="right:27.200000000000045px;text-align:right;top:609.66px;font-size:13px;line-height:13px;font-weight:normal;color:#4c5f69;letter-spacing:0px;">2</div>
<div class="b" style="left:478.4px;top:640.59px;width:18.2px;height:15.5px;border-radius:4px;background:#127f78;color:#fff;font-size:12px;font-weight:bold;line-height:16.5px;text-align:center">7</div>
<div class="b" style="left:515.9px;top:640.69px;width:15px;height:15px;border-radius:50%;background:#ffc20e;color:#5b3d12;font-size:12.5px;font-weight:normal;line-height:15.5px;text-align:center">M</div>
<div class="t" style="left:535.6px;top:642.09px;font-size:13px;line-height:13px;font-weight:normal;color:#4c5f69;letter-spacing:-0.75px;">ICMPANOM</div>
<div class="t" style="left:678.8px;top:642.09px;font-size:13px;line-height:13px;font-weight:normal;color:#4c5f69;letter-spacing:-0.35px;">Detection of anomalies in ICMP traffic</div>
<div class="t" style="right:27.200000000000045px;text-align:right;top:642.09px;font-size:13px;line-height:13px;font-weight:normal;color:#4c5f69;letter-spacing:0px;">16</div>
<div class="b" style="left:1388px;top:259px;width:4px;height:296px;background:#b7c3ca;border-radius:2px"></div>
<div class="t" style="left:480px;top:678.29px;font-size:11px;line-height:11px;font-weight:normal;color:#4b5862;letter-spacing:-0.1px;">2021-06-24 15:40 - 2021-06-24 17:40</div>
<svg class="b" style="left:1385px;top:684px;width:7px;height:7px" viewBox="0 0 7 7"><path d="M6.1,0.4V6.1H0.2" fill="none" stroke="#4c4c56" stroke-width="1.6"/></svg>
</body></html>
